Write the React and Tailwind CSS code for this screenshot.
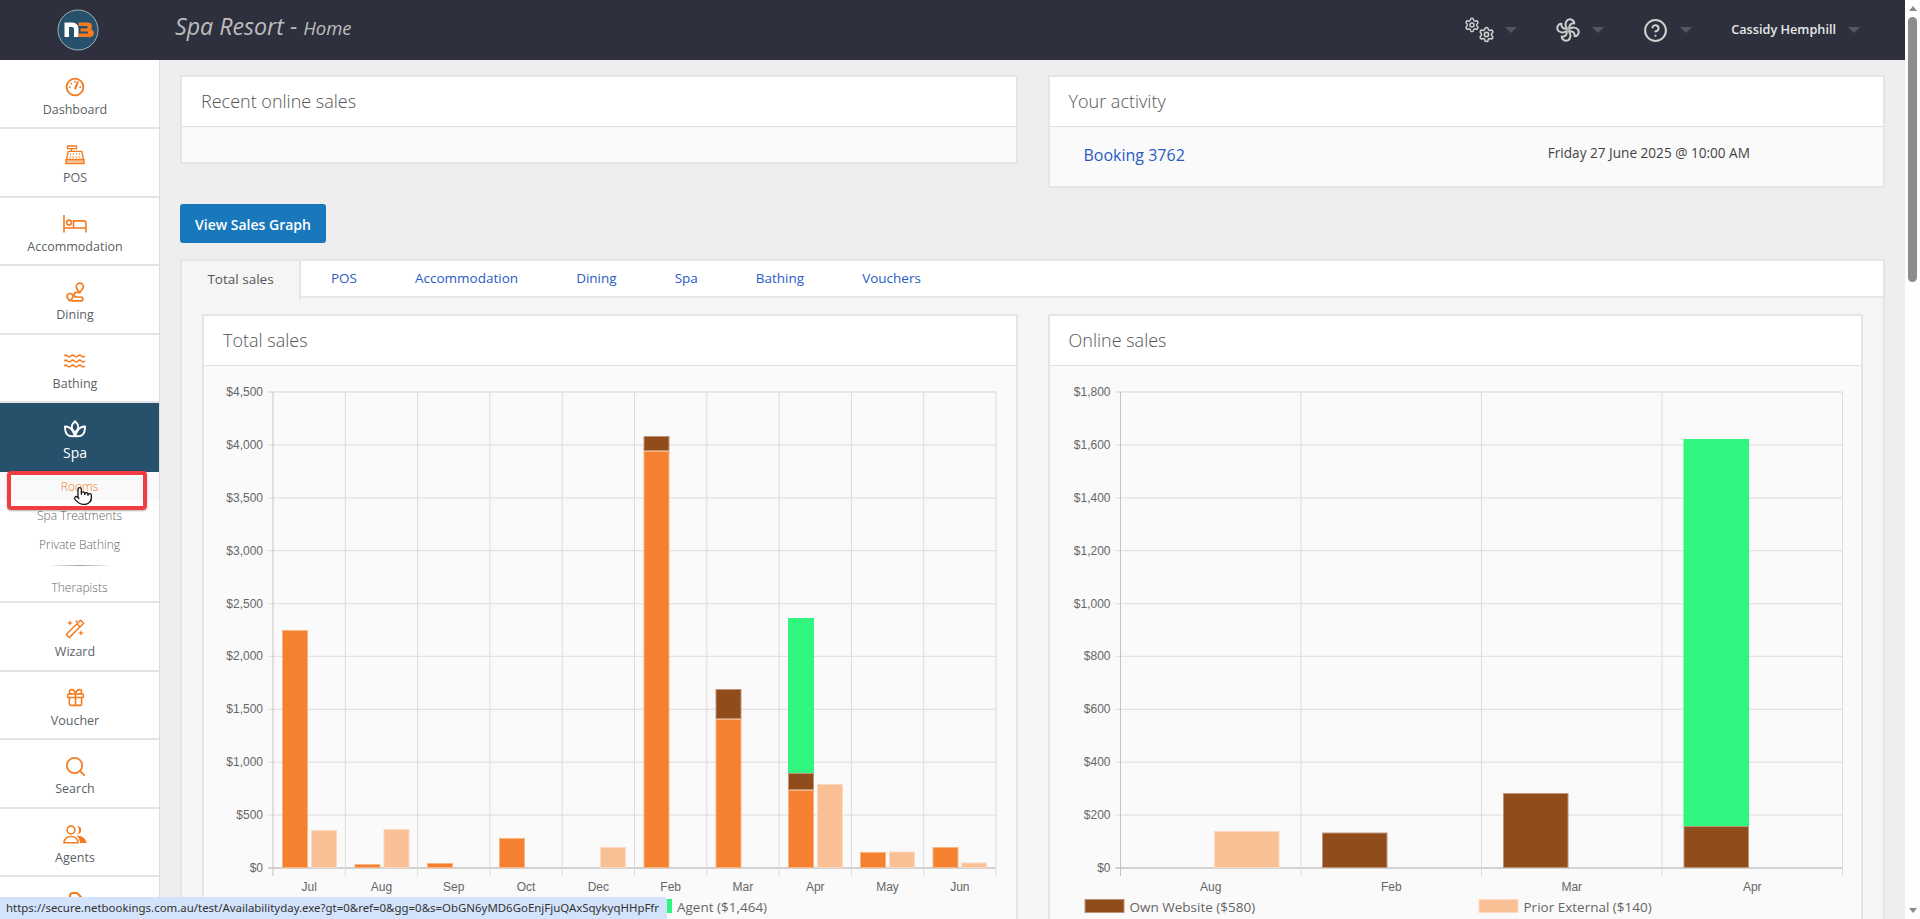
import React from "react";
import { Gift, Search, Settings, CircleHelp, Pointer } from "lucide-react";

const ORANGE = "#f47b20";
const BAR = { o: "#f3812f", b: "#914c1b", g: "#30f57f", p: "#f9bf95" };
const EDGE = { o: "#f8b583", b: "#bd9478", g: "#30f57f", p: "#fcd9c0" };

function DashIcon() {
  return (
    <svg width="20" height="20" viewBox="0 0 20 20" fill="none" stroke={ORANGE} strokeWidth="1.8">
      <circle cx="10" cy="10" r="8.4" />
      <path d="M12.8 5.2 10.2 11.6" strokeWidth="2" strokeLinecap="round" />
      <circle cx="10" cy="5" r=".9" fill={ORANGE} stroke="none" />
      <circle cx="6.2" cy="6.6" r=".9" fill={ORANGE} stroke="none" />
      <circle cx="4.8" cy="10.2" r=".9" fill={ORANGE} stroke="none" />
      <circle cx="15.2" cy="10.2" r=".9" fill={ORANGE} stroke="none" />
    </svg>
  );
}

function PosIcon() {
  return (
    <svg width="20" height="20" viewBox="0 0 20 20" fill="none" stroke={ORANGE} strokeWidth="1.4">
      <path d="M2.5 1h9v2.6h-9zM6.5 3.6v2.6" />
      <path d="M3.2 6.4h13.6l1.6 8H1.6z" />
      <path d="M1 14.6h18v4H1z" fill="#f9bf95" />
      <path d="M5 9h1M8 9h1M11 9h1M14 9h1M4.6 12h1M7.6 12h1M10.6 12h1M13.6 12h1" strokeWidth="1.6" />
    </svg>
  );
}

function BedIcon() {
  return (
    <svg width="24" height="18" viewBox="0 0 24 18" fill="none" stroke={ORANGE} strokeWidth="1.6">
      <path d="M1 0v17.5M23 17.5V8.5a2.6 2.6 0 0 0-2.6-2.6H10.5v7M1 13h22" />
      <circle cx="6" cy="7.6" r="2.5" />
    </svg>
  );
}

function RouteIcon() {
  return (
    <svg width="20" height="20" viewBox="0 0 20 20" fill="none" stroke={ORANGE} strokeWidth="1.7">
      <path d="M14.8 1.2a3.6 3.6 0 0 1 3.6 3.6c0 2-2 3.6-3.6 5.6-1.6-2-3.6-3.6-3.6-5.6a3.6 3.6 0 0 1 3.6-3.6z" />
      <path d="M5 11.5a3 3 0 0 1 3 3c0 1.6-1.6 2.9-3 4.4-1.4-1.5-3-2.8-3-4.4a3 3 0 0 1 3-3z" />
      <path d="M14.8 10.4h-3.3a2.3 2.3 0 0 0 0 4.6h4.5a1.9 1.9 0 0 1 0 3.8H7" strokeLinecap="round" />
    </svg>
  );
}

function WavesIcon() {
  const wave = "q1.7-1.7 3.5 0t3.5 0 3.5 0 3.5 0 3.5 0 3.5 0";
  return (
    <svg width="22" height="14" viewBox="0 0 22 14" fill="none" stroke={ORANGE} strokeWidth="1.5">
      <path d={`M0 2${wave}`} />
      <path d={`M0 7${wave}`} />
      <path d={`M0 12${wave}`} />
    </svg>
  );
}

function LotusIcon() {
  return (
    <svg width="22" height="18" viewBox="0 0 22 18" fill="none" stroke="#fff" strokeWidth="1.9" strokeLinejoin="round">
      <path d="M11 1.2c2.2 2 3.3 3.8 3.3 5.8S13 11 11 12.8C9 11 7.7 9 7.7 7S8.8 3.2 11 1.2z" />
      <path d="M1 6.5c3.3.1 6 1.7 7.3 4 .9 1.6 1.7 3 2.7 5.5-3.3.6-6.2.3-7.9-1.6C1.6 12.7 1 9.8 1 6.5z" />
      <path d="M21 6.5c-3.3.1-6 1.7-7.3 4-.9 1.6-1.7 3-2.7 5.5 3.3.6 6.2.3 7.9-1.6C20.4 12.7 21 9.8 21 6.5z" />
    </svg>
  );
}

function WandIcon() {
  return (
    <svg width="20" height="20" viewBox="0 0 20 20" fill="none" stroke={ORANGE} strokeWidth="1.5">
      <path d="M15.5 1.2 18.6 4.3 4.3 18.6 1.2 15.5zM12 4.8l3.1 3.1" strokeLinejoin="round" />
      <path d="M5 1l.8 2.2L8 4l-2.2.8L5 7l-.8-2.2L2 4l2.2-.8zM11.5.5l.5 1.2 1.2.5-1.2.5-.5 1.2-.5-1.2-1.2-.5 1.2-.5zM16 11l.8 2.2 2.2.8-2.2.8L16 17l-.8-2.2-2.2-.8 2.2-.8z" fill={ORANGE} stroke="none" />
    </svg>
  );
}

function AgentsIcon() {
  return (
    <svg width="24" height="19" viewBox="0 0 24 19" fill="none" stroke={ORANGE} strokeWidth="1.6">
      <circle cx="8" cy="5" r="3.9" />
      <path d="M1 17.8c0-3.9 3.1-6.3 7-6.3s7 2.4 7 6.3z" />
      <path d="M14.5.8a4.3 4.3 0 0 1 0 8.5c1-1.2 1.5-2.7 1.5-4.3s-.5-3-1.5-4.2zM13.5 10.5c5.5 0 9.5 3 10 7.5h-6.5c-.2-3-1.3-5.5-3.5-7.5z" fill={ORANGE} stroke="none" />
    </svg>
  );
}

function GearsIcon() {
  return (
    <div className="relative w-[30px] h-[24px]">
      <Settings size={16} strokeWidth={2.2} className="absolute left-0 -top-px" />
      <Settings size={17} strokeWidth={2.2} className="absolute left-[14px] top-[8px]" />
    </div>
  );
}

function FanIcon() {
  // pinwheel: one blade leaning clockwise, turned four times
  const blade = "M10.8 10.2C8.8 7.5 9.2 3.2 12.2 1.6 15.2.6 18.6 2.6 18.2 5.4 15.4 5 12.8 7 13.3 10.4";
  return (
    <svg width="24" height="24" viewBox="0 0 24 24" fill="none" stroke="currentColor" strokeWidth="2" strokeLinejoin="round" strokeLinecap="round">
      {[0, 90, 180, 270].map((r) => (
        <path key={r} d={blade} transform={`rotate(${r} 12 12)`} />
      ))}
      <circle cx="12" cy="12" r="1" fill="currentColor" stroke="none" />
    </svg>
  );
}

function Logo() {
  return (
    <svg width="42" height="42" viewBox="0 0 42 42">
      <circle cx="21" cy="21" r="20" fill="#27506b" stroke="#9fb0ba" strokeWidth="1" />
      <path d="M7.5 13.5h8a6 6 0 0 1 6 6V28h-4.5v-8a2 2 0 0 0-2-2h-3V28H7.5z" fill="#fff" />
      <path d="M21.5 13.5h9.5a3.8 3.8 0 0 1 3 6.4 4 4 0 0 1-2.7 8.1h-9.8v-3.6h8.5a1 1 0 0 0 0-2h-6.5v-3h6a1 1 0 0 0 0-2.3h-8z" fill={ORANGE} />
    </svg>
  );
}

function Caret() {
  return <span className="block w-0 h-0 border-x-[6px] border-x-transparent border-t-[6px] border-t-[#555660]" />;
}

function SideItem({ icon, label }) {
  return (
    <div className="h-[68.4px] flex flex-col items-center pr-[9px] pt-[15px] border-b-2 border-[#e6e2e8] text-[#5b5f66]">
      <div className="h-[22px] flex items-center justify-center">{icon}</div>
      <div className="mt-[3px] text-[12.5px] leading-[18px]">{label}</div>
    </div>
  );
}

function Panel({ title, children, className = "" }) {
  return (
    <div className={`border-2 border-[#e5e5e5] bg-[#fafafa] ${className}`}>
      <div className="h-[50px] bg-white border-b border-[#e0e0e0] flex items-center px-[19px] text-[18px] font-light text-[#555]">{title}</div>
      {children}
    </div>
  );
}

// page coordinates are kept in the data, the svg viewBox maps them into the panel
function Chart({ ox, x0, x1, columns, max, step, bars, legend }) {
  const top = 392;
  const bottom = 868;
  const colW = (x1 - x0) / columns.length;
  const ticks = [];
  for (let v = 0; v <= max; v += step) ticks.push(v);
  const yFor = (v) => bottom - (v / max) * (bottom - top);
  return (
    <svg className="block" width="811" height="553" viewBox={`${ox} 366 811 553`}>
      {ticks.map((v) => (
        <g key={v}>
          <line x1={x0 - 5} x2={x1} y1={yFor(v)} y2={yFor(v)} stroke={v === 0 ? "#c4c4c4" : "#e2e2e2"} strokeWidth="1.3" />
          <text x={x0 - 10} y={yFor(v) + 4} textAnchor="end" fontSize="12" fill="#666" fontFamily="'Liberation Sans', sans-serif">
            {"$" + v.toLocaleString("en-US")}
          </text>
        </g>
      ))}
      {columns.map((_, i) => (
        <line key={i} x1={x0 + i * colW} x2={x0 + i * colW} y1={top} y2={876} stroke={i === 0 ? "#c4c4c4" : "#dcdcdc"} strokeWidth="1" />
      ))}
      <line x1={x1} x2={x1} y1={top} y2={876} stroke="#dcdcdc" strokeWidth="1" />
      {bars.map((b, i) => (
        <rect key={i} x={b.x + 0.5} y={b.top + 0.5} width={b.w - 1} height={b.bottom - b.top - 1} fill={BAR[b.c]} stroke={EDGE[b.c]} strokeWidth="1" />
      ))}
      {columns.map((m, i) => (
        <text key={m} x={x0 + (i + 0.5) * colW} y={891} textAnchor="middle" fontSize="12" fill="#666" fontFamily="'Liberation Sans', sans-serif">
          {m}
        </text>
      ))}
      {legend.map((l) => (
        <g key={l.label}>
          <rect x={l.x + 0.5} y={899.5} width="39" height="13" fill={BAR[l.c]} stroke={EDGE[l.c]} />
          <text x={l.x + 45} y={912} fontSize="13.5" fill="#666" fontFamily="'Open Sans', sans-serif">
            {l.label}
          </text>
        </g>
      ))}
    </svg>
  );
}

const totalBars = [
  { x: 282, w: 26, top: 630, bottom: 868, c: "o" },
  { x: 311, w: 26, top: 830, bottom: 868, c: "p" },
  { x: 354.5, w: 26, top: 864, bottom: 868, c: "o" },
  { x: 383.5, w: 26, top: 829, bottom: 868, c: "p" },
  { x: 427, w: 26, top: 863, bottom: 868, c: "o" },
  { x: 499, w: 26, top: 838, bottom: 868, c: "o" },
  { x: 600, w: 26, top: 847, bottom: 868, c: "p" },
  { x: 643.5, w: 26, top: 436, bottom: 451, c: "b" },
  { x: 643.5, w: 26, top: 451, bottom: 868, c: "o" },
  { x: 715.5, w: 26, top: 689, bottom: 719, c: "b" },
  { x: 715.5, w: 26, top: 719, bottom: 868, c: "o" },
  { x: 788, w: 26, top: 618, bottom: 773, c: "g" },
  { x: 788, w: 26, top: 773, bottom: 790, c: "b" },
  { x: 788, w: 26, top: 790, bottom: 868, c: "o" },
  { x: 817, w: 26, top: 784, bottom: 868, c: "p" },
  { x: 860, w: 26, top: 852, bottom: 868, c: "o" },
  { x: 889, w: 26, top: 851.5, bottom: 868, c: "p" },
  { x: 932.5, w: 26, top: 847, bottom: 868, c: "o" },
  { x: 961, w: 26, top: 862.5, bottom: 868, c: "p" },
];

const onlineBars = [
  { x: 1213.5, w: 65.5, top: 831, bottom: 868, c: "p" },
  { x: 1321.5, w: 65.5, top: 832.5, bottom: 868, c: "b" },
  { x: 1502.5, w: 65.5, top: 793, bottom: 868, c: "b" },
  { x: 1683, w: 65.5, top: 439, bottom: 826, c: "g" },
  { x: 1683, w: 65.5, top: 826, bottom: 868, c: "b" },
];

const tabs = ["POS", "Accommodation", "Dining", "Spa", "Bathing", "Vouchers"];

export default function App() {
  return (
    <div className="relative flex h-screen overflow-hidden bg-white font-['Open_Sans',sans-serif]">
      <div className="flex-1 min-w-0 flex flex-col">
        <header className="h-[60px] shrink-0 bg-[#2e303e] flex items-center">
          <div className="w-[159px] flex justify-center pr-[3px]">
            <Logo />
          </div>
          <div className="ml-[16px] pb-[7px] italic text-[#bdbdbd] text-[23.2px]">
            Spa Resort - <span className="text-[18.5px]">Home</span>
          </div>
          <div className="ml-auto flex items-center text-[#cfcfcf]">
            <GearsIcon />
            <div className="ml-[11px]"><Caret /></div>
            <div className="ml-[39px] w-[24px]"><FanIcon /></div>
            <div className="ml-[12px]"><Caret /></div>
            <CircleHelp size={25} strokeWidth={2} className="ml-[39px]" />
            <div className="ml-[12px]"><Caret /></div>
            <div className="ml-[39px] text-[12.7px] font-semibold text-[#e8e8e8]">Cassidy Hemphill</div>
            <div className="ml-[12px] mr-[45px]"><Caret /></div>
          </div>
        </header>

        <div className="flex-1 min-h-0 flex">
          <aside className="w-[160px] shrink-0 bg-white border-r border-[#dddddd] pt-px">
            <SideItem icon={<DashIcon />} label="Dashboard" />
            <SideItem icon={<PosIcon />} label="POS" />
            <SideItem icon={<BedIcon />} label="Accommodation" />
            <SideItem icon={<RouteIcon />} label="Dining" />
            <SideItem icon={<WavesIcon />} label="Bathing" />
            <div className="h-[69px] bg-[#27506b] text-white flex flex-col items-center pr-[9px] pt-[15px]">
              <div className="h-[22px] flex items-center justify-center"><LotusIcon /></div>
              <div className="mt-[4px] text-[14px] leading-[18px]">Spa</div>
            </div>
            <div className="h-[131.4px] border-b-2 border-[#e6e2e8] text-[12px] font-light text-[#666] text-center">
              <div className="h-[28px] bg-[#f9f9f9] text-[#f47b20] leading-[30px]">Rooms</div>
              <div className="h-[29px] leading-[32px]">Spa Treatments</div>
              <div className="h-[29px] leading-[31px]">Private Bathing</div>
              <div className="mx-auto mt-[7px] w-[64px] h-px bg-linear-to-r from-transparent via-gray-400 to-transparent" />
              <div className="mt-[11px] leading-[22px]">Therapists</div>
            </div>
            <SideItem icon={<WandIcon />} label="Wizard" />
            <SideItem icon={<Gift size={21} color={ORANGE} strokeWidth={1.8} />} label="Voucher" />
            <SideItem icon={<Search size={23} color={ORANGE} strokeWidth={1.8} />} label="Search" />
            <SideItem icon={<AgentsIcon />} label="Agents" />
            <div className="flex justify-center pr-[9px] pt-[15px]">
              <svg width="16" height="20" viewBox="0 0 16 20" fill="none" stroke={ORANGE} strokeWidth="2">
                <path d="M3 19V4a3 3 0 0 1 3-3h4l4 4v14" />
              </svg>
            </div>
          </aside>

          <main className="flex-1 min-w-0 bg-[#eeeeee] px-[20px] pt-[15px] overflow-hidden">
            <div className="grid grid-cols-2 gap-x-[30px] items-start">
              <Panel title="Recent online sales">
                <div className="h-[35px]" />
              </Panel>
              <Panel title="Your activity">
                <div className="h-[59px] flex items-start pt-[16px] pl-[34px]">
                  <a className="text-[16px] text-[#2a5bc4] leading-[24px]">Booking 3762</a>
                  <div className="ml-[363px] text-[13.6px] text-[#444] leading-[20px]">Friday 27 June 2025 @ 10:00 AM</div>
                </div>
              </Panel>
            </div>

            <button className="block mt-[16px] w-[146px] h-[39px] pt-px rounded-[3px] bg-[#1878bb] text-white text-[14px] font-semibold">
              View Sales Graph
            </button>

            <div className="mt-[16px] border-2 border-[#e5e5e5] bg-[#f5f5f5]">
              <div className="h-[37px] flex bg-white border-b-2 border-[#e5e5e5] text-[13.5px]">
                <div className="w-[119px] -mb-[2px] h-[39px] pb-[2px] bg-[#f5f5f5] border-r-2 border-[#e5e5e5] flex items-center justify-center text-[#555]">Total sales</div>
                <div className="flex items-center pl-[1px]">
                  {tabs.map((t) => (
                    <a key={t} className="px-[29px] text-[#2a5bc4]">{t}</a>
                  ))}
                </div>
              </div>
              <div className="px-[20px] pt-[16px] grid grid-cols-2 gap-x-[30px] items-start">
                <Panel title="Total sales">
                  <Chart
                    ox={204}
                    x0={273}
                    x1={996}
                    max={4500}
                    step={500}
                    columns={["Jul", "Aug", "Sep", "Oct", "Dec", "Feb", "Mar", "Apr", "May", "Jun"]}
                    bars={totalBars}
                    legend={[{ x: 632, c: "g", label: "Agent ($1,464)" }]}
                  />
                </Panel>
                <Panel title="Online sales">
                  <Chart
                    ox={1049.5}
                    x0={1120}
                    x1={1842}
                    max={1800}
                    step={200}
                    columns={["Aug", "Feb", "Mar", "Apr"]}
                    bars={onlineBars}
                    legend={[
                      { x: 1084, c: "b", label: "Own Website ($580)" },
                      { x: 1478, c: "p", label: "Prior External ($140)" },
                    ]}
                  />
                </Panel>
              </div>
            </div>
          </main>
        </div>
      </div>

      {/* page scrollbar */}
      <div className="w-[15px] shrink-0 bg-[#fdfdfd] flex flex-col items-center">
        <div className="mt-[6px] w-0 h-0 border-x-[4px] border-x-transparent border-b-[5px] border-b-[#8a8a8a]" />
        <div className="mt-[6px] w-[9px] h-[265px] rounded-[5px] bg-[#8c8c8c]" />
        <div className="mt-auto mb-[6px] w-0 h-0 border-x-[4px] border-x-transparent border-t-[5px] border-t-[#8a8a8a]" />
      </div>

      {/* red highlight and pointer drawn on top of the menu */}
      <div className="absolute left-[7px] top-[471px] w-[140px] h-[39px] rounded-[4px] border-4 border-[#ef3d42] shadow-[0_1px_2px_rgba(0,0,0,0.3)]" />
      <Pointer size={20} strokeWidth={1.5} fill="#fff" color="#111" className="absolute left-[73px] top-[486px]" />

      {/* browser link preview */}
      <div className="absolute left-0 bottom-0 w-[667px] h-[22px] bg-[#d3e3fb] rounded-tr-[4px] pl-[6px] text-[11.45px] leading-[22px] text-[#333] whitespace-nowrap font-['Noto_Sans',sans-serif]">
        https://secure.netbookings.com.au/test/Availabilityday.exe?gt=0&amp;ref=0&amp;gg=0&amp;s=ObGN6yMD6GoEnjFjuQAxSqykyqHHpFfr
      </div>
    </div>
  );
}
